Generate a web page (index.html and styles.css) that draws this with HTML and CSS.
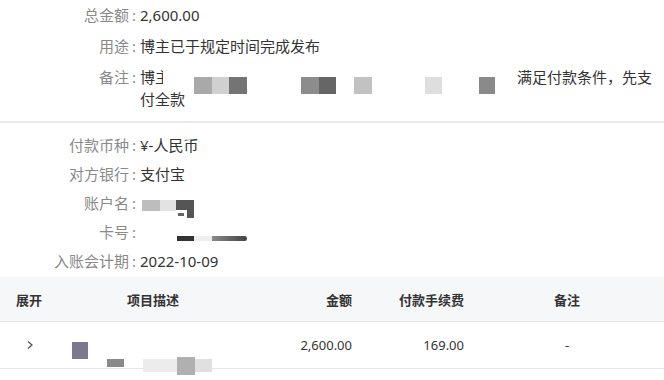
FILE: index.html
```html
<!DOCTYPE html>
<html lang="zh-CN">
<head>
<meta charset="utf-8">
<link rel="stylesheet" href="styles.css">
</head>
<body>
<div class="page">
  <section class="info info-top">
    <div class="label">总金额</div>
    <div class="value">2,600.00</div>
    <div class="label">用途</div>
    <div class="value">博主已于规定时间完成发布</div>
    <div class="label">备注</div>
    <div class="value remark">博<span class="clip">主</span><span class="gap"></span>满足付款条件，先支<br>付全款
      <span class="mosaic m-r1" style="left:54px;width:18px;background:#a9a9a9"></span>
      <span class="mosaic m-r1" style="left:72px;width:17px;background:#d0d0d0"></span>
      <span class="mosaic m-r1" style="left:89px;width:18px;background:#747474"></span>
      <span class="mosaic m-r1" style="left:161px;width:18px;background:#8c8c8c"></span>
      <span class="mosaic m-r1" style="left:179px;width:17px;background:#666"></span>
      <span class="mosaic m-r1" style="left:214px;width:18px;background:#c2c2c2"></span>
      <span class="mosaic m-r1" style="left:285px;width:17px;background:#dedede"></span>
      <span class="mosaic m-r1" style="left:339px;width:16px;background:#8a8a8a"></span>
    </div>
  </section>
  <div class="divider"></div>
  <section class="info info-second">
    <div class="label">付款币种</div>
    <div class="value">¥-人民币</div>
    <div class="label">对方银行</div>
    <div class="value">支付宝</div>
    <div class="label">账户名</div>
    <div class="value masked">
      <span class="mosaic" style="left:2px;top:8px;width:18px;height:11px;background:#bdbdbd"></span>
      <span class="mosaic" style="left:20px;top:8px;width:16px;height:11px;background:#e3e3e3"></span>
      <span class="mosaic" style="left:36px;top:8px;width:18px;height:10px;background:#555"></span>
      <span class="mosaic" style="left:47px;top:18px;width:7px;height:8px;background:#555"></span>
      <span class="mosaic" style="left:38px;top:21px;width:6px;height:3px;background:#666"></span>
    </div>
    <div class="label">卡号</div>
    <div class="value masked">
      <span class="mosaic" style="left:37px;top:15px;width:17px;height:5px;background:#333"></span>
      <span class="mosaic" style="left:54px;top:15px;width:18px;height:5px;background:#ededed"></span>
      <span class="mosaic card-tail"></span>
    </div>
    <div class="label">入账会计期</div>
    <div class="value">2022-10-09</div>
  </section>
  <table class="items">
    <colgroup>
      <col class="w-expand">
      <col class="w-desc">
      <col class="w-amount">
      <col class="w-fee">
      <col class="w-note">
      <col class="w-pad">
    </colgroup>
    <thead>
      <tr>
        <th class="c-left">展开</th>
        <th class="c-left">项目描述</th>
        <th class="c-right">金额</th>
        <th class="c-right">付款手续费</th>
        <th class="c-center">备注</th>
        <th class="c-pad"></th>
      </tr>
    </thead>
    <tbody>
      <tr>
        <td class="c-left c-chev">
          <svg class="chev" width="8" height="10" viewBox="0 0 8 10"><path d="M2 1.5 L6 5 L2 8.5" fill="none" stroke="#555" stroke-width="1.3"/></svg>
        </td>
        <td class="c-left desc-cell">
          <span class="mosaic" style="left:-39px;top:20px;width:16px;height:17px;background:#7c798d"></span>
          <span class="mosaic" style="left:-4px;top:37px;width:17px;height:8px;background:#8a8a8a"></span>
          <span class="mosaic" style="left:32px;top:37px;width:34px;height:13px;background:#ececec"></span>
          <span class="mosaic" style="left:66px;top:35px;width:18px;height:18px;background:#b0b0b0"></span>
          <span class="mosaic" style="left:84px;top:37px;width:17px;height:13px;background:#e0e0e0"></span>
        </td>
        <td class="c-right">2,600.00</td>
        <td class="c-right">169.00</td>
        <td class="c-center">-</td>
        <td class="c-pad"></td>
      </tr>
    </tbody>
  </table>
</div>
</body>
</html>
```
FILE: styles.css
```css
html, body {
  margin: 0;
  padding: 0;
  background: #fff;
}
body {
  width: 664px;
  height: 380px;
  overflow: hidden;
  font-family: "Noto Sans", "Noto Sans CJK SC", sans-serif;
  color: #333;
}
.info {
  display: grid;
  grid-template-columns: 136px 1fr;
  column-gap: 4px;
  font-size: 15px;
  line-height: 22px;
}
.info-top {
  padding-top: 4px;
  row-gap: 9px;
}
.info-second {
  padding-top: 11px;
  row-gap: 7px;
}
.label {
  text-align: right;
  color: #8a8a8a;
  white-space: nowrap;
}
.label::after {
  content: ":";
  margin-left: 3px;
}
.value {
  color: #333;
  white-space: nowrap;
  position: relative;
}
.clip {
  display: inline-block;
  width: 8px;
  overflow: hidden;
  vertical-align: top;
}
.gap {
  display: inline-block;
  width: 354px;
}
.mosaic {
  position: absolute;
  display: block;
}
.m-r1 {
  top: 11px;
  height: 17px;
}
.masked {
  height: 22px;
}
.card-tail {
  left: 72px;
  top: 15px;
  width: 35px;
  height: 5px;
  background: linear-gradient(90deg, #8a8a8a, #444);
  border-radius: 0 3px 3px 0;
}
.divider {
  margin-top: 11px;
  height: 2px;
  background: #ebebeb;
}
.items {
  margin-top: 5px;
  width: 664px;
  border-collapse: collapse;
  table-layout: fixed;
  font-size: 13px;
}
.w-expand { width: 111px; }
.w-desc { width: 145px; }
.w-amount { width: 112px; }
.w-fee { width: 112px; }
.w-note { width: 174px; }
.w-pad { width: 10px; }
.items th {
  height: 44px;
  background: #f6f7f9;
  font-weight: 600;
  color: #333;
  border-bottom: 1px solid #e6e6e6;
  padding: 0 16px;
}
.items td {
  height: 46px;
  border-bottom: 1px solid #e6e6e6;
  padding: 0 16px;
  color: #333;
}
.c-left { text-align: left; }
.c-right { text-align: right; }
.c-center { text-align: center; }
.items .c-pad { padding: 0; }
.items td.c-chev { padding-left: 26px; }
.chev {
  display: block;
}
.desc-cell {
  position: relative;
}
```
